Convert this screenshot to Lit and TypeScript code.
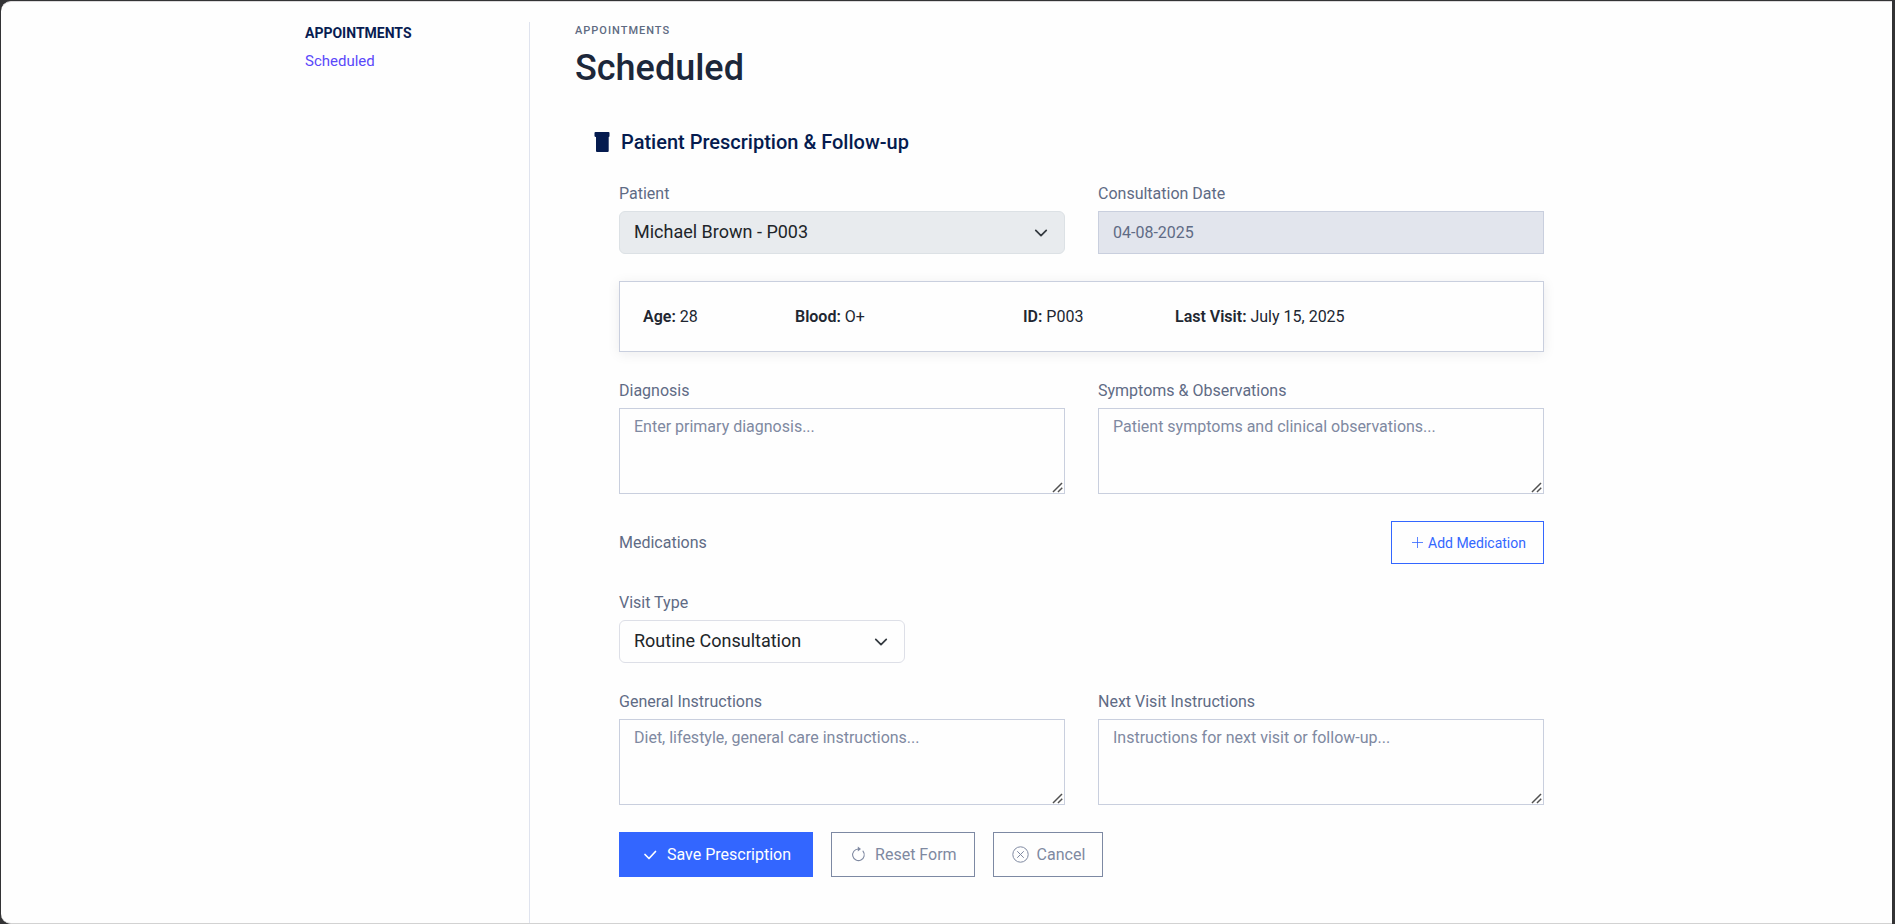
import { LitElement, html, css } from "lit";
import { customElement } from "lit/decorators.js";

@customElement("app-root")
export class AppRoot extends LitElement {
  static styles = css`
    :host {
      display: block;
      box-sizing: border-box;
      min-height: 100vh;
      padding: 1px 3px 0 1px;
      background: #333335;
      font-family: Roboto, "Liberation Sans", sans-serif;
      font-size: 16px;
      line-height: 24px;
      color: #212631;
    }
    *, *::before, *::after { box-sizing: border-box; }
    .window {
      min-height: calc(100vh - 1px);
      display: flex;
      padding: 20px 24px 0;
      background: #fefefe;
      border-top: 1px solid #dcdadc;
      border-bottom: 1px solid #d2d2d2;
      border-radius: 10px 0 0 10px;
    }
    .layout {
      display: flex;
      flex: 1;
      max-width: 1283px;
      margin: 0 auto;
    }
    .sidebar {
      flex: 0 0 224px;
      padding-top: 1px;
      font-size: 15px;
    }
    .sidebar-title {
      margin: 0 0 8px;
      font-size: 14px;
      line-height: 20px;
      font-weight: 700;
      color: #081c52;
    }
    .sidebar-link {
      display: block;
      line-height: 20px;
      color: #5a48fa;
      text-decoration: none;
    }
    .content {
      flex: 1;
      min-width: 0;
      padding: 1px 0 0 45px;
      border-left: 1px solid #dfe3ee;
    }
    .eyebrow {
      margin: 0;
      font-size: 11px;
      line-height: 16px;
      font-weight: 500;
      letter-spacing: 1px;
      color: #5f6b82;
    }
    .title {
      margin: 7px 0 0;
      font-size: 36px;
      line-height: 44px;
      font-weight: 500;
      color: #1c273a;
    }
    .section-title {
      display: flex;
      align-items: center;
      gap: 11px;
      margin: 40px 0 0 19px;
      font-size: 20px;
      line-height: 24px;
      font-weight: 500;
      color: #051b4f;
    }
    .form {
      display: flex;
      flex-direction: column;
      gap: 27px;
      padding: 28px 44px 44px;
    }
    .pair {
      display: grid;
      grid-template-columns: 1fr 1fr;
      gap: 33px;
    }
    .field {
      display: flex;
      flex-direction: column;
      gap: 5px;
      min-width: 0;
    }
    .visit { width: 286px; }
    .label { color: #5f6b85; }
    .control {
      display: block;
      width: 100%;
      margin: 0;
      padding: 6px 14px;
      border: 1px solid #c9cfde;
      border-radius: 0;
      background: #fefefe;
      font: inherit;
      color: #5f6b85;
    }
    .control::placeholder { color: #7f89a1; opacity: 1; }
    .date { height: 43px; background: #e2e5ed; }
    .area { height: 86px; resize: vertical; }
    .area::-webkit-resizer {
      background: url("data:image/svg+xml,%3Csvg xmlns='http://www.w3.org/2000/svg' viewBox='0 0 15 15'%3E%3Cpath d='M4.500 13.500l8-8M9.500 13.500l1.200-1.200M11.800 11.200l.9-.9' stroke='%23505050' stroke-width='1.500' stroke-linecap='square'/%3E%3C/svg%3E") right bottom / 15px 15px no-repeat;
    }
    .select-wrap { display: grid; align-items: center; }
    .select-wrap > * { grid-area: 1 / 1; }
    .chevron {
      justify-self: end;
      margin-right: 17px;
      pointer-events: none;
    }
    .select {
      height: 43px;
      padding: 0 40px 2px 14px;
      appearance: none;
      border-color: #dddfe7;
      border-radius: 6px;
      font-size: 18px;
      color: #212529;
    }
    .select:disabled {
      opacity: 1;
      border-color: #dce1e5;
      background: #e8ebee;
      color: #212529;
    }
    .card {
      display: grid;
      grid-template-columns: repeat(12, 1fr);
      column-gap: 35px;
      align-items: center;
      height: 71px;
      padding: 0 23px;
      border: 1px solid #c9cfde;
      background: #fefefe;
      box-shadow: 0 2px 12px rgba(20, 24, 40, 0.08);
      white-space: nowrap;
    }
    .span-2 { grid-column: span 2; }
    .span-3 { grid-column: span 3; }
    .span-5 { grid-column: span 5; }
    .strong { font-weight: 600; }
    .between {
      display: flex;
      align-items: center;
      justify-content: space-between;
    }
    .actions { display: flex; gap: 18px; }
    .btn {
      display: inline-flex;
      align-items: center;
      height: 45px;
      margin: 0;
      padding: 0 17px 0 18px;
      border: 1px solid #7d89a3;
      border-radius: 0;
      background: #fefefe;
      font: inherit;
      color: #7f89a1;
      cursor: pointer;
      white-space: nowrap;
    }
    .btn-primary {
      padding: 0 21px;
      border-color: #36f;
      background: #36f;
      color: #fff;
    }
    .btn-add {
      gap: 4px;
      height: 43px;
      border-color: #36f;
      font-size: 14px;
      color: #36f;
    }
    .btn-icon { gap: 8px; }
    .icon { display: block; flex: none; fill: none; stroke: currentColor; }
    .solid { fill: currentColor; stroke: none; }
  `;

  private chevron() {
    return html`<svg class="icon chevron" width="14" height="14" viewBox="0 0 16 16" stroke-width="2" stroke-linecap="round" stroke-linejoin="round"><path stroke="#343a40" d="m2 5 6 6 6-6" /></svg>`;
  }

  private area(id: string, label: string, placeholder: string) {
    return html`<div class="field">
      <label class="label" for=${id}>${label}</label>
      <textarea class="control area" id=${id} placeholder=${placeholder}></textarea>
    </div>`;
  }

  render() {
    return html`
      <div class="window">
        <div class="layout">
          <nav class="sidebar">
            <h2 class="sidebar-title">APPOINTMENTS</h2>
            <a class="sidebar-link" href="#scheduled">Scheduled</a>
          </nav>
          <main class="content">
            <p class="eyebrow">APPOINTMENTS</p>
            <h1 class="title">Scheduled</h1>
            <h2 class="section-title">
              <svg class="icon solid" width="16" height="20" viewBox="0 0 16 20"><path d="M1.500 0h13q1 0 1 1v3q0 1-.8 1v14q0 1-1 1H3q-1 0-1-1V5Q.5 5 .5 4V1q0-1 1-1z" /></svg>
              Patient Prescription &amp; Follow-up
            </h2>
            <form class="form" @submit=${(e: Event) => e.preventDefault()}>
              <div class="pair">
                <div class="field">
                  <label class="label" for="patient">Patient</label>
                  <div class="select-wrap">
                    <select class="control select" id="patient" disabled>
                      <option>Michael Brown - P003</option>
                    </select>
                    ${this.chevron()}
                  </div>
                </div>
                <div class="field">
                  <label class="label" for="date">Consultation Date</label>
                  <input class="control date" id="date" type="text" value="04-08-2025" readonly />
                </div>
              </div>

              <div class="card">
                <div class="span-2"><b class="strong">Age:</b> 28</div>
                <div class="span-3"><b class="strong">Blood:</b> O+</div>
                <div class="span-2"><b class="strong">ID:</b> P003</div>
                <div class="span-5"><b class="strong">Last Visit:</b> July 15, 2025</div>
              </div>

              <div class="pair">
                ${this.area("diagnosis", "Diagnosis", "Enter primary diagnosis...")}
                ${this.area("symptoms", "Symptoms & Observations", "Patient symptoms and clinical observations...")}
              </div>

              <div class="between">
                <span class="label">Medications</span>
                <button class="btn btn-add" type="button">
                  <svg class="icon" width="14" height="14" viewBox="0 0 14 14"><path d="M7.500 1v11M2 6.500h11" stroke-width="1" opacity=".8" /></svg>
                  Add Medication
                </button>
              </div>

              <div class="field visit">
                <label class="label" for="visit">Visit Type</label>
                <div class="select-wrap">
                  <select class="control select" id="visit">
                    <option>Routine Consultation</option>
                  </select>
                  ${this.chevron()}
                </div>
              </div>

              <div class="pair">
                ${this.area("general", "General Instructions", "Diet, lifestyle, general care instructions...")}
                ${this.area("next", "Next Visit Instructions", "Instructions for next visit or follow-up...")}
              </div>

              <div class="actions">
                <button class="btn btn-primary btn-icon" type="submit">
                  <svg class="icon" width="18" height="18" viewBox="0 0 18 18"><path d="m4 8.500 4 4 6.500-7" stroke-width="1.700" stroke-linecap="round" stroke-linejoin="round" /></svg>
                  Save Prescription
                </button>
                <button class="btn btn-icon" type="reset">
                  <svg class="icon" width="17" height="17" viewBox="0 0 17 17"><path d="M8.300 3a5.800 5.800 0 1 0 4.700 2.200" stroke-width="1.100" stroke-linecap="round" /><path class="solid" d="M7.800.5v5L11 3z" /></svg>
                  Reset Form
                </button>
                <button class="btn btn-icon" type="button">
                  <svg class="icon" width="17" height="17" viewBox="0 0 17 17"><circle cx="8.500" cy="8.500" r="7.700" /><path d="m5.500 5.500 6 6m0-6-6 6" stroke-linecap="round" /></svg>
                  Cancel
                </button>
              </div>
            </form>
          </main>
        </div>
      </div>
    `;
  }
}
